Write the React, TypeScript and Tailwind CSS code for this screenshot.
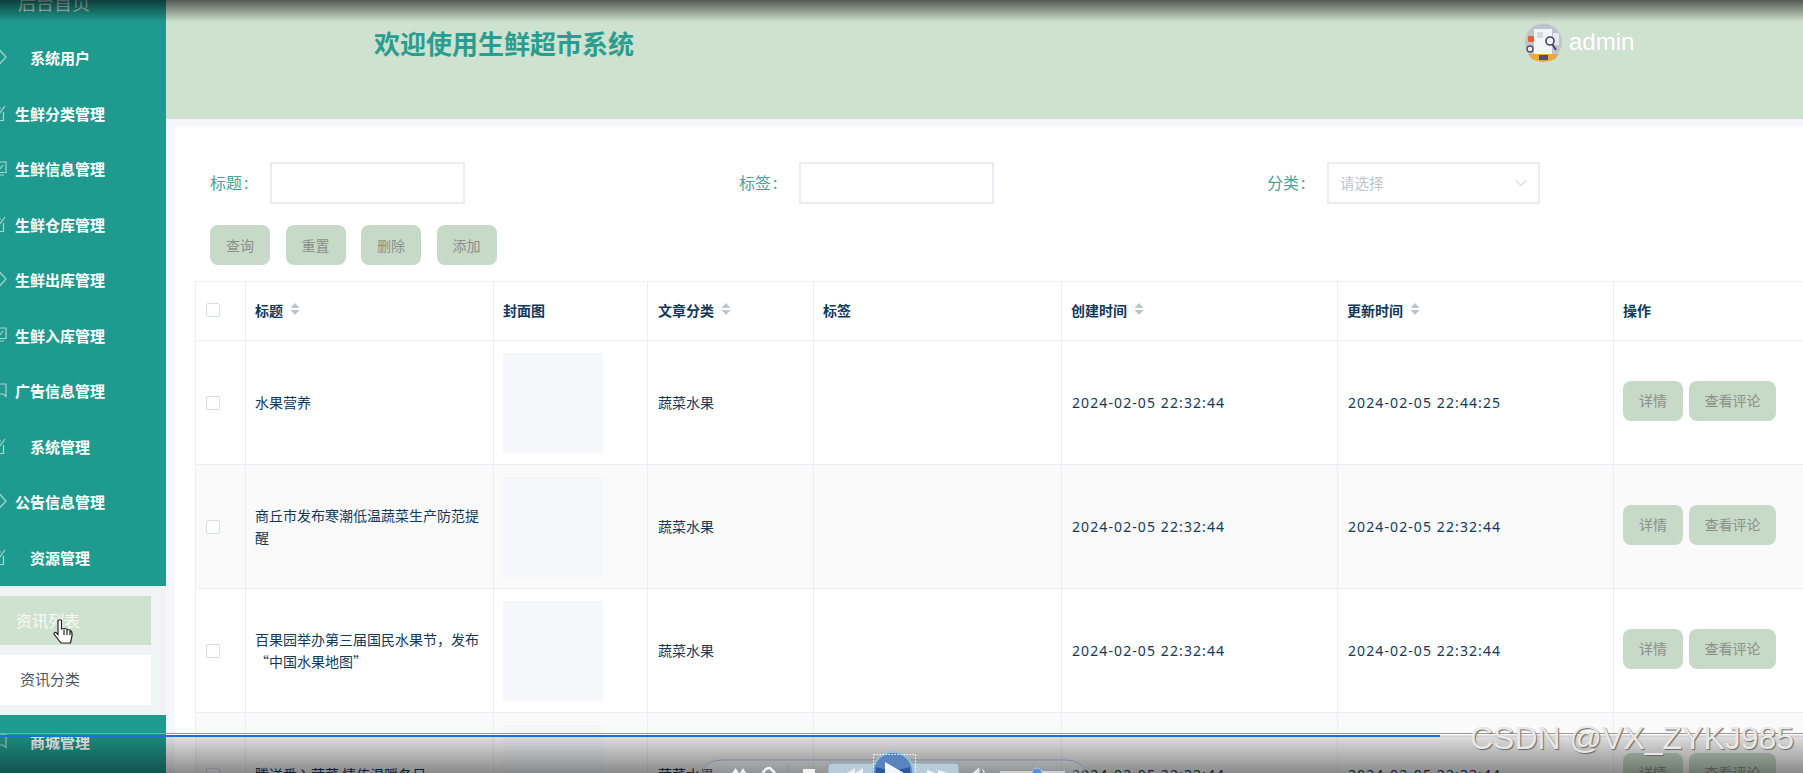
import React from "react";

const cjk = "font-['Noto_Sans_CJK_SC','Noto_Sans',sans-serif]";

function Diamond() {
  return (
    <svg width="14" height="16" viewBox="0 0 14 16" fill="none" stroke="#a9d6d0" strokeWidth="1.2">
      <path d="M7 1.5 L13 8 L7 14.5 L1 8 Z" />
    </svg>
  );
}
function Pencil() {
  return (
    <svg width="14" height="18" viewBox="0 0 14 18" fill="none" stroke="#a9d6d0" strokeWidth="1.2">
      <path d="M8 4 H2 V16.5 H10.5 V8" />
      <path d="M6 10 L12 2" />
    </svg>
  );
}
function Check() {
  return (
    <svg width="14" height="16" viewBox="0 0 14 16" fill="none" stroke="#a9d6d0" strokeWidth="1.2">
      <path d="M1 2 H13 V12.5 H1 Z M3 15 H11" />
      <path d="M4 7 L6.5 9.5 L10 5" />
    </svg>
  );
}
function Note() {
  return (
    <svg width="14" height="16" viewBox="0 0 14 16" fill="none" stroke="#a9d6d0" strokeWidth="1.2">
      <path d="M1 2 H13 V14.5 L10 12 H1 Z" />
    </svg>
  );
}

const menu: [string, React.ReactNode][] = [
  ["后台首页", null],
  ["系统用户", <Diamond />],
  ["生鲜分类管理", <Pencil />],
  ["生鲜信息管理", <Check />],
  ["生鲜仓库管理", <Pencil />],
  ["生鲜出库管理", <Diamond />],
  ["生鲜入库管理", <Check />],
  ["广告信息管理", <Note />],
  ["系统管理", <Pencil />],
  ["公告信息管理", <Diamond />],
  ["资源管理", <Pencil />],
];

function MenuRow({ label, icon, first }: { label: string; icon: React.ReactNode; first?: boolean }) {
  return (
    <div className={`relative flex h-[55.5px] shrink-0 items-center justify-center ${first ? "pr-[58px]" : "pr-[46px]"}`}>
      {icon ? <span className="absolute left-[-7px] top-[18px]">{icon}</span> : null}
      <span className={first ? "text-[18px] font-normal text-[#c9e6e2]" : "text-[15px] font-bold text-white"}>{label}</span>
    </div>
  );
}

function Sidebar() {
  return (
    <aside className="flex h-[773px] w-[166px] shrink-0 flex-col overflow-hidden bg-[#1f9a8e]">
      <div className="-mt-[25px] flex flex-col">
        {menu.map(([label, icon], i) => (
          <MenuRow key={label} label={label} icon={icon} first={i === 0} />
        ))}
      </div>
      <div className="flex h-[129px] shrink-0 flex-col gap-[10px] bg-[#f0f4f4] pr-[15px] pt-[10px]">
        <div className="flex h-[49px] items-center bg-[#cfe1cf] pl-[16px] text-[16px] text-[#f7faf5]">资讯列表</div>
        <div className="flex h-[50px] items-center bg-white pl-[20px] text-[15px] text-[#4b5563]">资讯分类</div>
      </div>
      <MenuRow label="商城管理" icon={<Note />} />
    </aside>
  );
}

function Avatar() {
  return (
    <svg width="37" height="40" viewBox="0 0 37 40">
      <circle cx="18.5" cy="20" r="18.5" fill="#bfc3cb" />
      <rect x="9" y="7" width="18" height="26" fill="#f2f5fb" />
      <rect x="12" y="10" width="6" height="6" fill="#d5d9e2" />
      <path d="M3 32 H34 L30 37 Q18.5 43 7 37 Z" fill="#eaa93a" />
      <rect x="14" y="33" width="9" height="5" fill="#4a5270" />
      <rect x="3" y="14" width="6" height="6" rx="1" fill="#ee5a3a" />
      <circle cx="5" cy="27" r="3" fill="#eef0f4" stroke="#4a5270" strokeWidth="1.4" />
      <rect x="28" y="11" width="6" height="12" fill="#e4e7ee" />
      <circle cx="25" cy="19" r="4" fill="#f2f5fb" stroke="#3d4460" strokeWidth="1.6" />
      <path d="M27.5 22.5 L31 28" stroke="#3d4460" strokeWidth="1.8" />
    </svg>
  );
}

function Header() {
  return (
    <header className="flex h-[119px] shrink-0 bg-[#cfe1cf]">
      <h1 className="ml-[208px] mt-[23px] h-[40px] w-[1151px] text-[26px] font-bold leading-[40px] text-[#2a9d8f]">欢迎使用生鲜超市系统</h1>
      <div className="mt-[22px] flex h-[40px] items-center gap-[7px]">
        <Avatar />
        <span className="font-['Liberation_Sans',sans-serif] text-[24px] text-white">admin</span>
      </div>
    </header>
  );
}

function Field({ label, w, mr, children }: { label: string; w: string; mr: string; children?: React.ReactNode }) {
  return (
    <div className={`flex items-center ${mr}`}>
      <label className="mb-[3px] w-[60px] text-[16px] text-[#4aa396]">{label}<span className="ml-[2px]">:</span></label>
      <div className={`flex h-[42px] items-center justify-between border-2 border-[#ebebf3] bg-white ${w}`}>{children}</div>
    </div>
  );
}

function SortCaret() {
  return (
    <svg className="ml-[7px] inline-block align-[0px]" width="10" height="14" viewBox="0 0 10 14" fill="#c0c4cc">
      <path d="M5 1 L9.5 6 H0.5 Z M5 13 L9.5 8 H0.5 Z" />
    </svg>
  );
}

function Box() {
  return <span className="block h-[14px] w-[14px] rounded-[2px] border border-[#d8dce6] bg-white" />;
}

function Btn({ children, w }: { children: React.ReactNode; w: string }) {
  return (
    <button className={`h-[40px] rounded-[8px] bg-[#c7dac7] text-[14px] text-[#8a8f8a] ${w}`}>{children}</button>
  );
}

const rows = [
  ["水果营养", "2024-02-05 22:32:44", "2024-02-05 22:44:25"],
  ["商丘市发布寒潮低温蔬菜生产防范提醒", "2024-02-05 22:32:44", "2024-02-05 22:32:44"],
  ["百果园举办第三届国民水果节，发布\n“中国水果地图”", "2024-02-05 22:32:44", "2024-02-05 22:32:44"],
  ["腾送番入蔬菜 情传温暖各日", "2024-02-05 22:32:44", "2024-02-05 22:32:44"],
];

function DataTable() {
  const th = "border border-[#ebeef5] pb-[2px] pl-[9px] pr-[6px] text-left text-[14px] font-bold text-[#12395a]";
  const td = "border border-[#ebeef5] pl-[9px] pr-[6px] text-[14px] text-[#12395a]";
  const date = "pl-[10px] font-['Noto_Sans',sans-serif] tracking-[1.1px]";
  return (
    <table className="w-[1608px] table-fixed border-collapse">
      <colgroup>
        <col className="w-[50px]" />
        <col className="w-[248px]" />
        <col className="w-[154px]" />
        <col className="w-[166px]" />
        <col className="w-[248px]" />
        <col className="w-[276px]" />
        <col className="w-[276px]" />
        <col className="w-[190px]" />
      </colgroup>
      <thead>
        <tr className="h-[59px]">
          <th className={th}><span className="ml-[1px] block"><Box /></span></th>
          <th className={th}>标题<SortCaret /></th>
          <th className={th}>封面图</th>
          <th className={`${th} pl-[10px]`}>文章分类<SortCaret /></th>
          <th className={th}>标签</th>
          <th className={th}>创建时间<SortCaret /></th>
          <th className={th}>更新时间<SortCaret /></th>
          <th className={th}>操作</th>
        </tr>
      </thead>
      <tbody>
        {rows.map((r, i) => (
          <tr key={r[0]} className={`h-[124px] ${i % 2 === 1 ? "bg-[#fafafa]" : "bg-white"}`}>
            <td className={td}><span className="ml-[1px] block"><Box /></span></td>
            <td className={`${td} whitespace-pre-line pb-[2px] leading-[22px]`}>{r[0]}</td>
            <td className={td}><div className="h-[100px] w-[100px] bg-[#f5f7fa]" /></td>
            <td className={`${td} pl-[10px]`}>蔬菜水果</td>
            <td className={td} />
            <td className={`${td} ${date}`}>{r[1]}</td>
            <td className={`${td} ${date}`}>{r[2]}</td>
            <td className={td}>
              <div className="-mt-[4px] flex gap-[6px]">
                <Btn w="w-[60px]">详情</Btn>
                <Btn w="w-[87px]">查看评论</Btn>
              </div>
            </td>
          </tr>
        ))}
      </tbody>
    </table>
  );
}

function Player() {
  return (
    <svg className="absolute left-[700px] top-[745px]" width="390" height="28" viewBox="0 0 390 28" fill="none">
      <path d="M2 28 Q6 15 22 15 H365 Q382 15 386 28" stroke="#7f88a3" strokeWidth="1" fill="#b9bcc2" fillOpacity="0.2" />
      <path d="M32 28 L35.5 23 L39 28 M40 28 L43 23 L46 28" fill="#f2f2f2" />
      <path d="M63 28 Q65 23 70 23 L75 28" stroke="#f2f2f2" strokeWidth="2.5" />
      <path d="M88 20 V28" stroke="#8d8d8d" />
      <rect x="103" y="24" width="12" height="4" fill="#f4f4f4" />
      <path d="M128 28 V22 Q128 18 133 18 H254 Q259 18 259 22 V28" fill="#b8ccd8" stroke="#8aa0b5" />
      <path d="M147 28 L155 23 V28 Z M155 28 L163 23 V28 Z" fill="#eef2f5" />
      <path d="M227 25 L236 28 H227 Z M238 25 L248 28 H238 Z" fill="#f4f4f4" />
      <circle cx="193" cy="27" r="20" fill="#5a84bd" stroke="#8fc3db" strokeWidth="2" />
      <path d="M176 22 Q193 28 210 22 V28 H176 Z" fill="#2d5a9a" />
      <path d="M185 17 L204 28 H185 Z" fill="#f5f7fa" />
      <rect x="173.5" y="9.5" width="42" height="20" fill="none" stroke="#fff" strokeDasharray="1.5 1.5" />
      <path d="M273 28 L279 23 V28 Z M282 24 Q285 26 284 28" stroke="#e6e6e6" fill="#e6e6e6" />
      <rect x="300" y="26" width="65" height="2" fill="#d0d0d0" />
      <circle cx="337" cy="28" r="5" fill="#5f8fd0" stroke="#b4cde8" />
    </svg>
  );
}

export default function App() {
  return (
    <div className={`relative flex h-[773px] w-[1803px] overflow-hidden bg-white ${cjk}`}>
      <Sidebar />
      <main className="flex h-[773px] min-w-0 flex-1 flex-col overflow-hidden">
        <Header />
        <div className="flex-1 overflow-hidden bg-[#f7f7fb] pl-[9px] pt-[8px]">
          <div className="h-[700px] bg-white pl-[20px] pt-[35px]">
            <div className="flex pl-[15px]">
              <Field label="标题" w="w-[195px]" mr="mr-[274px]" />
              <Field label="标签" w="w-[195px]" mr="mr-[273px]" />
              <Field label="分类" w="w-[213px]" mr="">
                <span className="pl-[11px] text-[14.5px] text-[#c0c4cc]">请选择</span>
                <svg className="mr-[11px]" width="12" height="12" viewBox="0 0 12 12" fill="none" stroke="#c0c4cc" strokeWidth="1">
                  <path d="M1 3.5 L6 8.5 L11 3.5" />
                </svg>
              </Field>
            </div>
            <div className="mt-[21px] flex gap-[15.5px] pl-[15px]">
              <Btn w="w-[60px]">查询</Btn>
              <Btn w="w-[60px]">重置</Btn>
              <Btn w="w-[60px]">删除</Btn>
              <Btn w="w-[60px]">添加</Btn>
            </div>
            <div className="mt-[16px]">
              <DataTable />
            </div>
          </div>
        </div>
      </main>

      <div className="pointer-events-none absolute inset-x-0 top-0 h-[22px] bg-gradient-to-b from-black/60 to-transparent" />
      <div className="pointer-events-none absolute inset-x-0 bottom-0 h-[38px] bg-gradient-to-b from-black/10 to-black/45" />
      <div className="absolute left-0 top-[733px] h-[1px] w-full bg-[#9a9a9a]" />
      <div className="absolute left-0 top-[735px] h-[2px] w-[1440px] bg-[#1a6fd8]" />
      <div className="absolute left-[1440px] top-[736px] h-[1px] w-[363px] bg-[#d0d0d0]" />
      <Player />
      <div className="absolute left-[1470px] top-[721px] font-['Liberation_Sans',sans-serif] text-[32px] leading-[34px] text-[#e8e8e8] [text-shadow:1px_1px_1px_#666]">CSDN @VX_ZYKJ985</div>
      <svg className="absolute left-[52px] top-[618px]" width="22" height="28" viewBox="0 0 22 28" fill="#fff" stroke="#222" strokeWidth="1.2">
        <path d="M6 2.5 Q8 1 9.5 2.5 V11 L12 10.5 L14 11 L16 11.5 L18.5 12.5 Q20.5 14 20 18 L18.5 25 H9 L2 16 Q2 14 4 14.5 L6 16.5 Z" />
        <path d="M12 12 V17 M15 12 V17 M18 13 V17" fill="none" />
      </svg>
    </div>
  );
}
